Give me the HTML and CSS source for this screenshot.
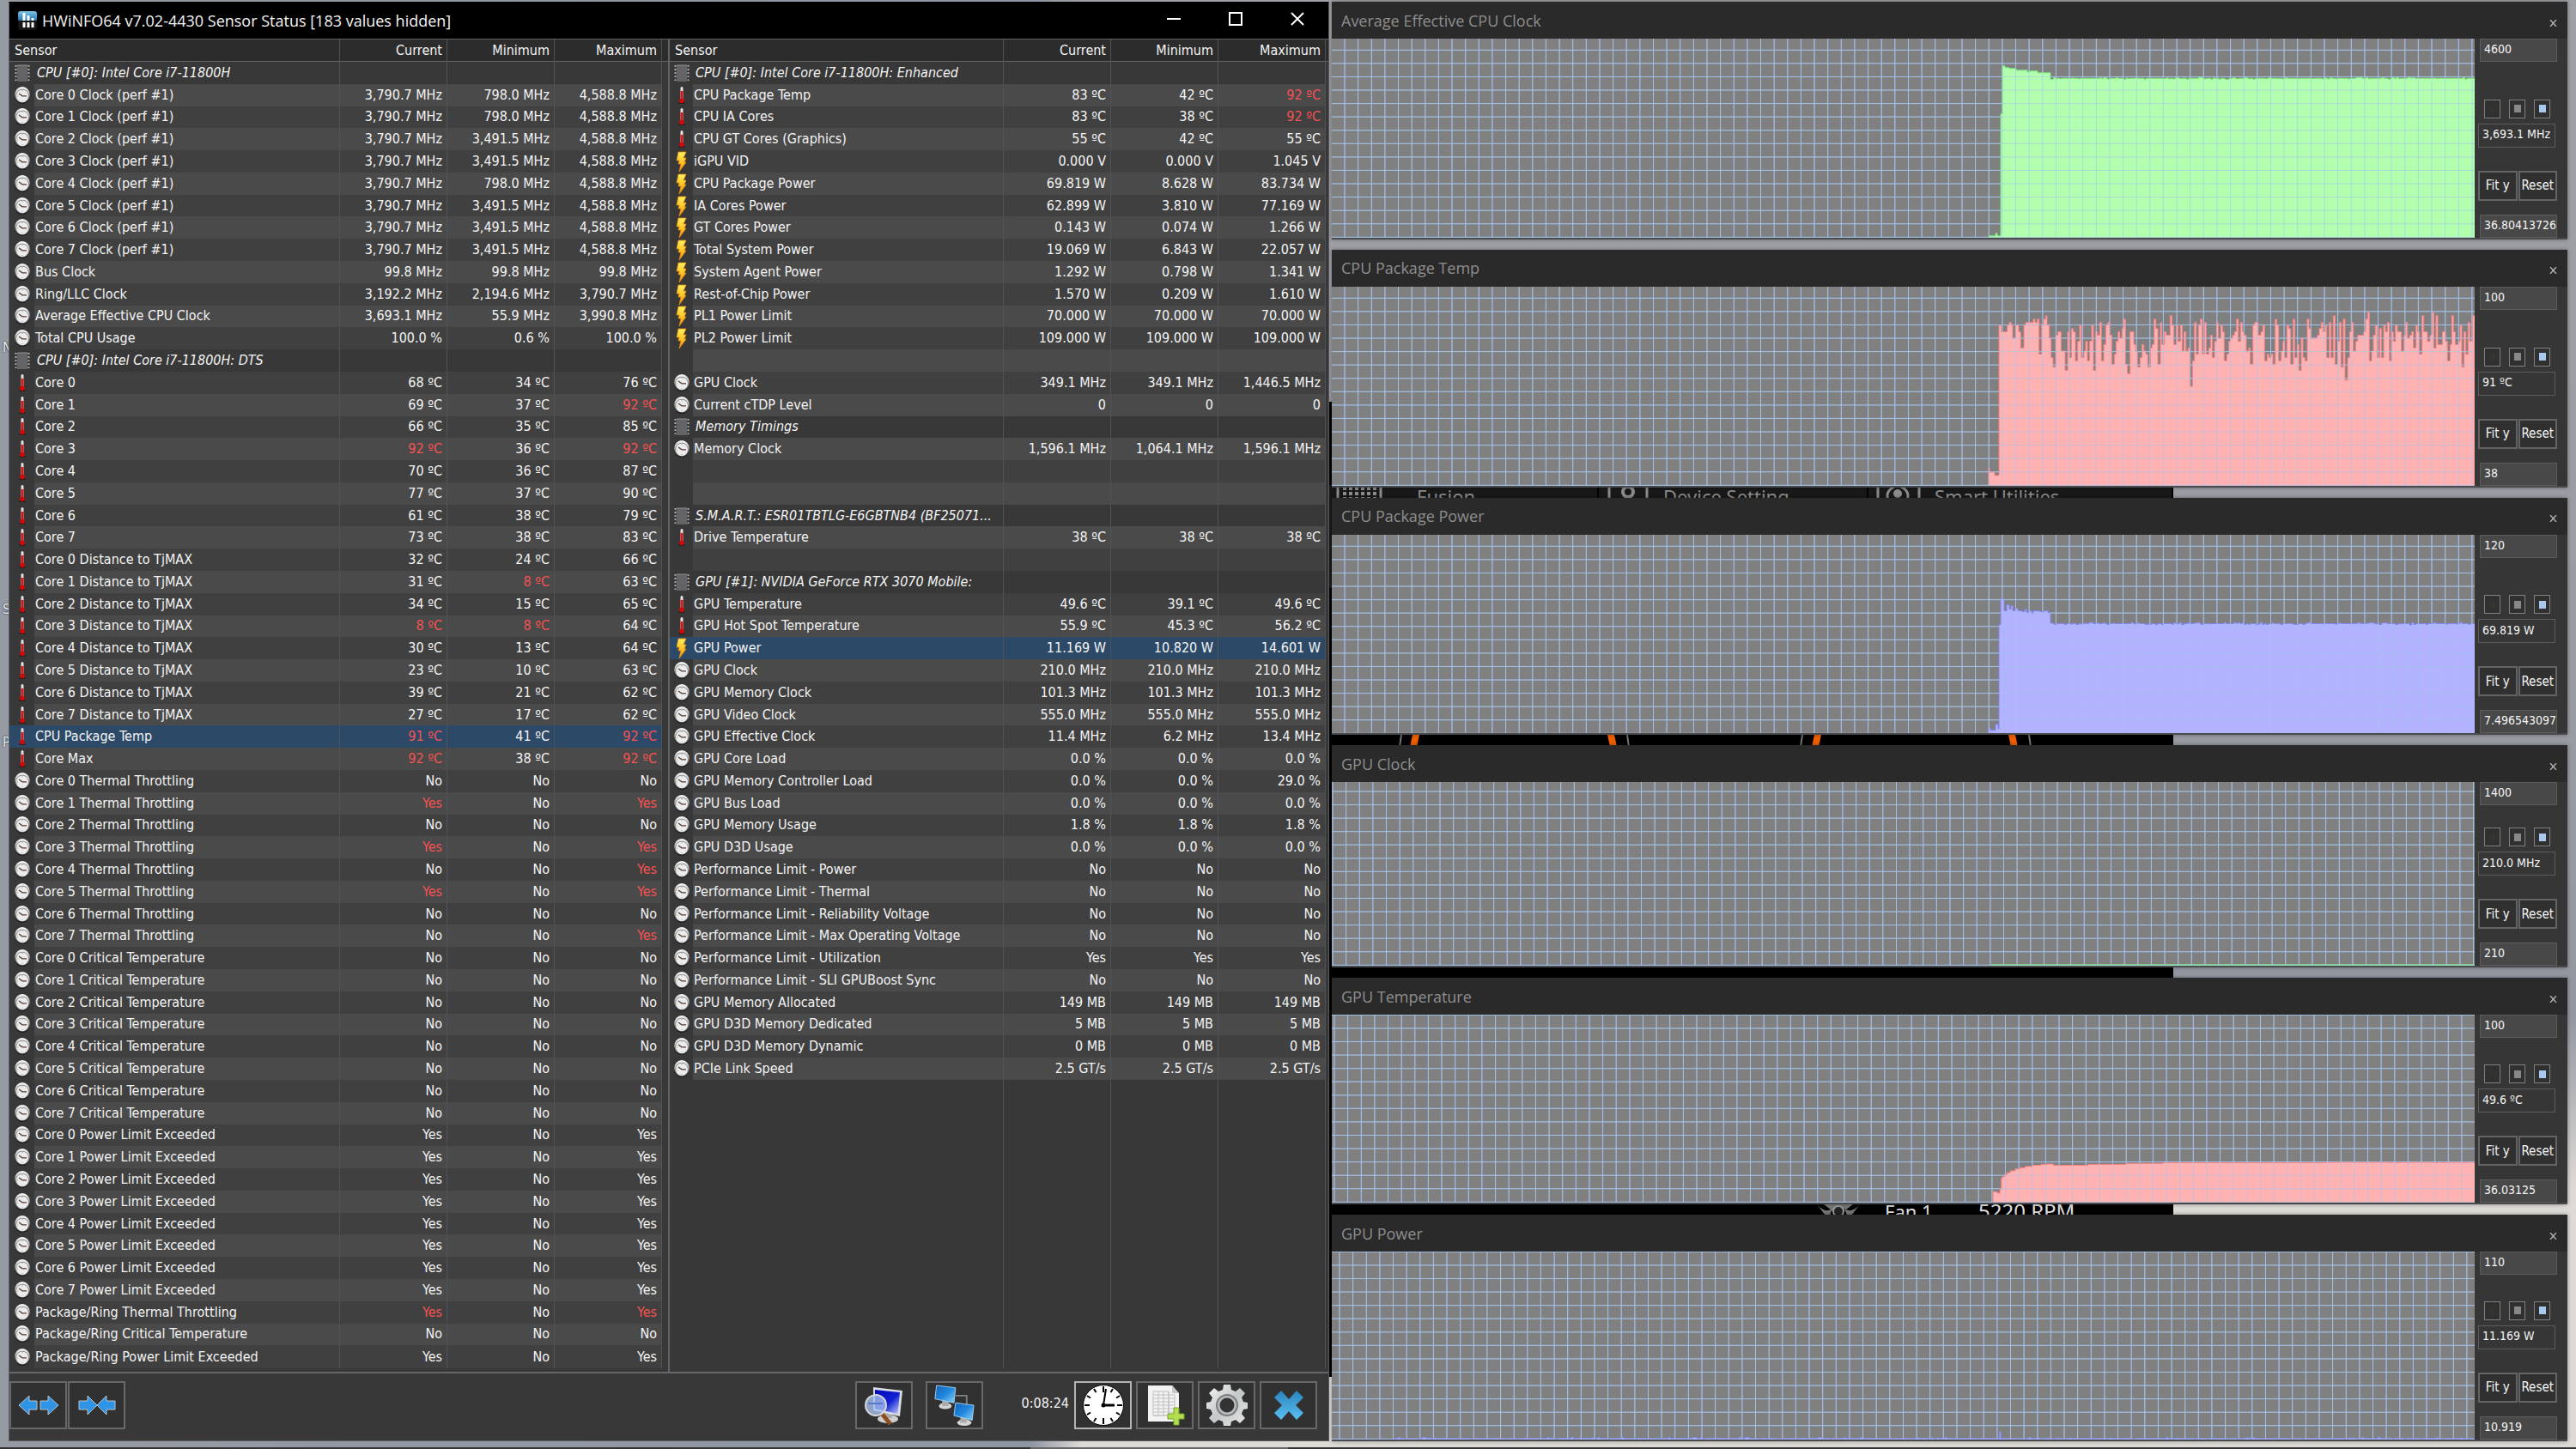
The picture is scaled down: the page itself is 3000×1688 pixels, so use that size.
FILE: index.html
```html
<!DOCTYPE html>
<html lang="en">
<head>
<meta charset="utf-8">
<title>HWiNFO64 Sensor Status</title>
<link rel="stylesheet" href="styles.css">
</head>
<body>
<svg class="defs" aria-hidden="true">
  <defs>
    <linearGradient id="g-rim" x1="0" y1="0" x2="0" y2="1"><stop offset="0" stop-color="#fff"/><stop offset=".5" stop-color="#aaa"/><stop offset="1" stop-color="#444"/></linearGradient>
    <linearGradient id="g-bolt" x1="0" y1="0" x2="0" y2="1"><stop offset="0" stop-color="#fff060"/><stop offset=".5" stop-color="#ffc628"/><stop offset="1" stop-color="#ff8c10"/></linearGradient>
    <linearGradient id="g-blue" x1="0" y1="0" x2="1" y2="1"><stop offset="0" stop-color="#1263b8"/><stop offset=".5" stop-color="#1f86dd"/><stop offset="1" stop-color="#8fd4fb"/></linearGradient>
    <linearGradient id="g-navy" x1="0" y1="0" x2="1" y2="1"><stop offset="0" stop-color="#0008b8"/><stop offset=".55" stop-color="#1020d0"/><stop offset="1" stop-color="#c8d0ff"/></linearGradient>
    <linearGradient id="g-metal" x1="0" y1="0" x2="1" y2="1"><stop offset="0" stop-color="#f6f6f6"/><stop offset=".5" stop-color="#c4c8c8"/><stop offset="1" stop-color="#e8e8e8"/></linearGradient>
    <linearGradient id="g-x" x1="0" y1="0" x2="0" y2="1"><stop offset="0" stop-color="#2a84bd"/><stop offset="1" stop-color="#5cc0f4"/></linearGradient>
    <linearGradient id="g-logo" x1="0" y1="0" x2="0" y2="1"><stop offset="0" stop-color="#7cc4ea"/><stop offset="1" stop-color="#1c6ca6"/></linearGradient>
    <symbol id="i-clock" viewBox="0 0 18 20"><ellipse cx="9" cy="11" rx="9" ry="9" fill="#1c1c1c"/><ellipse cx="9" cy="9.500" rx="8.800" ry="9.500" fill="url(#g-rim)"/><ellipse cx="9" cy="10.500" rx="7.400" ry="7.800" fill="#777"/><ellipse cx="9" cy="10.800" rx="7" ry="7.400" fill="#ececec"/><path d="M5 8l4 2.800h5" fill="none" stroke="#553a30" stroke-width="1.300"/><path d="M9 4v1.300M9 16v1.300M3 11h1" stroke="#999" stroke-width=".8"/></symbol>
    <symbol id="i-therm" viewBox="0 0 18 20"><ellipse cx="9" cy="19" rx="4" ry="1" fill="#222"/><rect x="7.500" y="0" width="3" height="17" rx="1.500" fill="#e8e0e0"/><rect x="7.600" y="5" width="2.800" height="11" fill="#d81818"/><ellipse cx="9" cy="16.500" rx="2.900" ry="2.800" fill="#d40808"/></symbol>
    <symbol id="i-bolt" viewBox="0 0 18 24"><path d="M5 1h9l-3 7h3l-2 5h2L6 24l2-9H5l1-4H3z" fill="url(#g-bolt)" stroke="#e08a10" stroke-width=".8"/></symbol>
    <symbol id="i-chip" viewBox="0 0 18 20"><path d="M1.500 1v18M16.500 1v18" stroke="#b4b4b4" stroke-width="2" stroke-dasharray="1.800 2.300"/><rect x="3" y="0" width="12" height="20" rx="1" fill="#646466"/><path d="M3 1.500h12" stroke="#7c7c80"/></symbol>
  </defs>
</svg>

<main class="desktop">
  <div class="desk-labels" aria-hidden="true"><span>N</span><span>S</span><span>P</span></div>

  <section class="backdrop" aria-label="Control Center">
    <div class="backdrop-tabs">
      <svg class="bt-icon" viewBox="0 0 54 24"><path d="M2 0v24M52 0v24" stroke="#8c8c8c" stroke-width="3"/><path d="M8 4h40M8 10h40M8 16h40" stroke="#8c8c8c" stroke-width="4" stroke-dasharray="4 3"/></svg><span class="bt-fusion">Fusion</span>
      <svg class="bt-icon" viewBox="0 0 54 24"><path d="M4 0v24M48 0v24" stroke="#8c8c8c" stroke-width="3"/><circle cx="26" cy="8" r="6" fill="none" stroke="#8c8c8c" stroke-width="4"/></svg><span class="bt-device">Device Setting</span>
      <svg class="bt-icon" viewBox="0 0 54 24"><path d="M3 0v24M51 0v24" stroke="#8c8c8c" stroke-width="3"/><path d="M16 20q-6-12 6-18M36 20q6-12-6-18" fill="none" stroke="#8c8c8c" stroke-width="3"/><circle cx="26" cy="10" r="5" fill="#8c8c8c"/></svg><span class="bt-smart">Smart Utilities</span>
    </div>
    <svg class="backdrop-dials" viewBox="0 0 983 12" preserveAspectRatio="none"><g fill="#f06000"><path d="M97 0h8l-3 12h-8zM324 0h8l3 12h-8zM565 0h8l-3 12h-8zM791 0h8l3 12h-8z"/></g><path d="M84 0l-2 12M347 0l2 12M551 0l-2 12M815 0l2 12" stroke="#777" stroke-width="2"/></svg>
    <div class="backdrop-fan">
      <svg viewBox="0 0 50 30"><path d="M0 3q10 12 20 4-10 10 0 22M50 3Q40 15 30 7q10 10 0 22M8 3h34L30 12H20z" fill="#777"/><circle cx="25" cy="11" r="6" fill="#222" stroke="#999" stroke-width="2"/></svg>
      <span>Fan 1</span><b>5220 RPM</b>
    </div>
  </section>

  <section class="sensors" aria-label="Sensor Status">
    <header class="titlebar">
      <svg class="logo" viewBox="0 0 22 22"><rect width="22" height="12" rx="3" fill="url(#g-logo)"/><rect y="11" width="22" height="11" rx="3" fill="#161616"/><path d="M7 2v9M12 5v6M17 8v3M7 13v6M12 13v6M17 13v6" stroke="#fff" stroke-width="3"/></svg>
      <h1>HWiNFO64 v7.02-4430 Sensor Status [183 values hidden]</h1>
      <button type="button" aria-label="Minimize"><svg viewBox="0 0 16 16"><path d="M0 8h16" stroke="#fff" stroke-width="2"/></svg></button>
      <button type="button" aria-label="Maximize"><svg viewBox="0 0 16 16"><path d="M1 1h14v14H1z" fill="none" stroke="#fff" stroke-width="2"/></svg></button>
      <button type="button" aria-label="Close"><svg viewBox="0 0 16 16"><path d="M1 1l14 14M15 1 1 15" stroke="#fff" stroke-width="2"/></svg></button>
    </header>
    <div class="panes">
      <div class="pane" id="pane-left"></div>
      <div class="pane pane-right" id="pane-right"></div>
    </div>
    <footer class="toolbar">
      <button type="button" class="tool" aria-label="Expand columns"><svg viewBox="0 0 48 24"><path d="M1 12 13 1v6h9v10h-9v6zM47 12 35 1v6h-9v10h9v6z" fill="#2f93e6" stroke="#b8c4cc"/></svg></button>
      <button type="button" class="tool" aria-label="Shrink columns"><svg viewBox="0 0 48 24"><path d="M24 12 13 1v6H3v10h10v6zM24 12 35 1v6h10v10H35v6z" fill="#2f93e6" stroke="#b8c4cc"/></svg></button>
      <span class="push"></span>
      <button type="button" class="tool" aria-label="Summary"><svg viewBox="0 0 48 48"><ellipse cx="29" cy="40" rx="12" ry="5" fill="#cfcfcf"/><path d="M24 30h10v9H24z" fill="#aaa"/><path d="M12 3l34 4-3 30-31-7z" fill="#d8dce4"/><path d="M14 6l29 3-2.500 25L14 28z" fill="url(#g-navy)"/><path d="M22 34l10 12" stroke="#8c4e20" stroke-width="5"/><circle cx="15" cy="24" r="12" fill="#a8c0ec" fill-opacity=".8" stroke="#d4d8dc" stroke-width="2"/><path d="M6 22h17" stroke="#5878d0" stroke-width="2"/></svg></button>
      <button type="button" class="tool tool-net" aria-label="Remote sensors"><svg viewBox="0 0 52 52"><path d="M28 14h14v14" fill="none" stroke="#7c8084" stroke-width="2"/><ellipse cx="15" cy="27" rx="8" ry="4" fill="#d4d4d4"/><path d="M11 20h8v7h-8z" fill="#aaa"/><path d="M4 1l24 3-2 19L2 18z" fill="url(#g-blue)" stroke="#a8d4f4"/><ellipse cx="39" cy="48" rx="9" ry="4" fill="#d4d4d4"/><path d="M34 40h8v8h-8z" fill="#aaa"/><path d="M28 23l23 3-2 19-23-6z" fill="url(#g-blue)" stroke="#a8d4f4"/></svg></button>
      <time class="elapsed">0:08:24</time>
      <button type="button" class="tool tool-active" aria-label="Reset clock"><svg viewBox="0 0 48 48"><circle cx="24" cy="24" r="23.500" fill="#fff" stroke="#000"/><g stroke="#000" stroke-width="2"><path d="M24 2v7M24 39v7M2 24h6M40 24h6"/><path d="M13 5l2.500 4M35 5l-2.500 4M5 13l4 2.500M43 13l-4 2.500M5 35l4-2.500M43 35l-4-2.500M13 43l2.500-4M35 43l-2.500-4"/></g><path d="M24 24l3-19" stroke="#000" stroke-width="2"/><path d="M24 24h13" stroke="#000" stroke-width="3"/><circle cx="24" cy="24" r="2.500"/></svg></button>
      <button type="button" class="tool" aria-label="Start logging"><svg viewBox="0 0 44 48"><path d="M2 1h28l8 9v33H2z" fill="#f2f2f2"/><path d="M30 1v9h8z" fill="#c8c8c8"/><path d="M8 8h18v28H8zM8 12h25M8 16h25M8 20h25M8 24h25M8 28h25M8 32h25M14 8v28M20 8v28M26 8v28M33 12v24H8" fill="none" stroke="#c0c0c0"/><path d="M32 27h6v7h6v6h-6v7h-6v-7h-7v-6h7z" fill="#b4dc50" stroke="#6ea820"/></svg></button>
      <button type="button" class="tool" aria-label="Settings"><svg viewBox="0 0 48 48"><path d="M20 0h8l1 6 5 2 5-4 6 6-4 5 2 5 5 1v7l-5 1-2 5 4 5-6 6-5-4-5 2-1 5h-8l-1-5-5-2-5 4-6-6 4-5-2-5-5-1v-7l5-1 2-5-4-5 6-6 5 4 5-2z" fill="url(#g-metal)"/><circle cx="24" cy="24" r="13" fill="#7c7e80"/><circle cx="24" cy="24" r="11" fill="#b8babc"/><circle cx="24" cy="24" r="8.500" fill="#333"/></svg></button>
      <button type="button" class="tool" aria-label="Close sensors"><svg viewBox="0 0 36 36"><path d="M9 1l9 10 9-10 8 8-9 9 9 9-8 8-9-10-9 10-8-8 9-9-9-9z" fill="url(#g-x)"/></svg></button>
    </footer>
  </section>

  <div class="graphs" id="graphs"></div>
  <div class="taskbar" aria-hidden="true"></div>
</main>
<script src="script.js"></script>
</body>
</html>
```
FILE: styles.css
```css
* { box-sizing: border-box; }

body {
  margin: 0;
  background: #9a9ca2;
  color: #f4f4f4;
  font: 16px/20px "DejaVu Sans Condensed", "Noto Sans", sans-serif;
}

button, input { font: inherit; color: inherit; border-radius: 0; margin: 0; }
.defs { position: absolute; width: 0; height: 0; }

.desktop {
  position: relative;
  display: grid;
  grid-template-columns: 1538fr 1439fr;
  grid-template-rows: 1fr 2px;
  column-gap: 3px;
  row-gap: 7px;
  min-height: 100vh;
  padding: 2px 10px 0;
  overflow: hidden;
  background: linear-gradient(90deg, #969ba3 0, #8e96a4 40%, transparent 42%), linear-gradient(#9fa1a6 0, #9a9ca3 50%, #9397a1 70%, #dedad6 82%, #dedad6 100%);
}

.desk-labels {
  position: absolute;
  left: 3px;
  top: 395px;
  display: grid;
  grid-template-rows: 305px 155px 20px;
  color: #e8ecf0;
  text-shadow: 0 0 2px #000;
}

/* application partly hidden behind the graphs */
.backdrop {
  position: absolute;
  left: 1548px;
  top: 468px;
  width: 983px;
  height: 1136px;
  background: #000;
  font-family: "Noto Sans", sans-serif;
}
.backdrop-tabs {
  position: absolute;
  top: 97px;
  left: 0;
  display: grid;
  grid-template-columns: 102px 212px 75px 239px 77px 278px;
  width: 100%;
  height: 120px;
  background: #191919;
  color: #8c8c8c;
  font-size: 22px;
  line-height: 26px;
}
.bt-icon { width: 54px; height: 24px; margin-left: 8px; }
.backdrop-tabs span { border-right: 2px solid #000; }
.backdrop-dials { position: absolute; top: 388px; left: 0; width: 100%; height: 14px; }
.backdrop-fan {
  position: absolute;
  top: 928px;
  left: 568px;
  display: grid;
  grid-template-columns: 50px 80px auto;
  column-gap: 29px;
  font-size: 22px;
  line-height: 30px;
  color: #e4e4e4;
}
.backdrop-fan svg { width: 50px; height: 30px; margin-top: 4px; }
.backdrop-fan b { font-weight: 400; font-size: 24px; }

/* sensor window */
.sensors {
  position: relative;
  display: flex;
  flex-direction: column;
  background: #383838;
  border: 1px solid #5a5c60;
  border-top-color: #000;
}
.titlebar {
  display: flex;
  align-items: center;
  height: 42px;
  padding-left: 10px;
  background: #000;
}
.logo { width: 22px; height: 22px; margin-right: 6px; }
.titlebar h1 {
  flex: 1;
  margin: 0;
  font: 400 18px/24px "Open Sans", "Noto Sans", sans-serif;
}
.titlebar button {
  width: 72px;
  height: 42px;
  padding: 0;
  border: 0;
  background: none;
}
.titlebar button svg { width: 16px; height: 16px; }

.panes {
  flex: 1;
  display: grid;
  grid-template-columns: 767fr 769fr;
  border-top: 1px solid #606266;
  border-bottom: 2px solid #64666a;
}
.pane { display: flex; padding-bottom: 4px; }
.pane-right { border-left: 2px solid #606266; }

.readings {
  width: 100%;
  height: 100%;
  table-layout: fixed;
  border-collapse: separate;
  border-spacing: 0;
}
.col-icon { width: 29px; }
.col-value { width: 125px; }
.col-end { width: 8px; }
.pane-right .col-icon { width: 27px; }
.pane-right .col-end { width: 4px; }
.readings th, .readings td { padding: 0; font-weight: 400; white-space: nowrap; }
.readings tr { height: 25px; }
.readings thead tr { height: 26px; }
.readings thead th {
  background: #2c2c2c;
  border-bottom: 1px solid #606266;
  text-align: right;
  padding-right: 5px;
}
.readings thead th:first-child { text-align: left; padding-left: 6px; }
.readings thead th + th { border-left: 1px solid #505256; }
.readings tbody th { text-align: left; overflow: hidden; text-overflow: ellipsis; padding-left: 1px; }
.readings tbody td + td, .readings th + td { text-align: right; padding-right: 5px; border-left: 1px solid #4e535a; }
.readings .icon svg { display: block; width: 18px; height: 20px; margin: 0 auto; }
.readings .icon .tall { height: 24px; }
.readings tr.odd > :not(.icon):not(.end) { background: #4a4a4a; }
.readings tr.even > :not(.icon):not(.end) { background: #404040; }
.readings tr.group th { font-style: italic; padding-left: 3px; }
.readings tr.selected > .icon, .readings tr.selected > :not(.icon):not(.end) { background: #2c4a68; }
.readings tbody .hot { color: #f55252; }

.toolbar {
  display: flex;
  align-items: center;
  gap: 1px;
  height: 78px;
  padding: 0 13px 5px 0;
}
.tool {
  display: flex;
  align-items: center;
  justify-content: center;
  width: 67px;
  height: 56px;
  padding: 0;
  border: 2px solid #68686a;
  background: #313131;
}
.tool svg { width: 48px; height: 48px; }
.tool:nth-of-type(-n+2) svg { height: 24px; }
.tool:last-child svg { width: 36px; height: 36px; }
.tool:nth-last-child(-n+3) { margin-left: 4px; }
.tool-net { margin-left: 14px; }
.tool-active { border-color: #b4b4b4; }
.push { flex: 1; }
.elapsed { margin: 0 5px 4px 44px; }

/* graph windows */
.graphs {
  position: relative;
  display: grid;
  grid-template-rows: 277fr 277fr 277fr 259fr 264fr 264fr;
  row-gap: 12px;
}
.graph {
  display: flex;
  flex-direction: column;
  background: #363636;
  box-shadow: 0 0 5px rgba(0, 0, 0, .35);
}
.graph-title {
  display: flex;
  align-items: center;
  justify-content: space-between;
  height: 43px;
  padding: 0 12px 0 11px;
  background: #2a2a2a;
  color: #8e8e8e;
  font: 18px/24px "Open Sans", "Noto Sans", sans-serif;
}
.graph-title h2 { margin: 0; font: inherit; }
.graph-title button { border: 0; padding: 0; background: none; width: 10px; line-height: 20px; }
.graph-title button svg { width: 9px; height: 8px; }
.graph-body { flex: 1; display: flex; min-height: 0; border-bottom: 2px solid #4a4a4c; }
.plot { flex: 1; min-width: 0; height: 0; min-height: 100%; background: #808080; display: block; }
.plot .grid { fill: none; stroke: #a6c4ec; stroke-opacity: .85; }
.plot .green { fill: #b2ffb0; stroke: #74e874; }
.plot .red { fill: #ffb2b2; stroke: #f58080; }
.plot .blue { fill: #b2b2ff; stroke: #8484f4; }

.controls {
  display: flex;
  flex-direction: column;
  width: 108px;
  padding: 0 12px 0 4px;
  font-size: 15px;
}
.controls input {
  width: 90px;
  height: 27px;
  margin-left: 2px;
  padding: 0 0 3px 4px;
  border: 1px solid #5c5c5c;
  background: #484848;
  font-size: 14px;
}
.controls .live { margin: 6px 0 27px; height: 28px; background: #363636; }
.swatches { display: flex; gap: 10px; margin: auto 0 0 7px; }
.swatches button {
  display: grid;
  place-items: center;
  width: 19px;
  height: 22px;
  padding: 0;
  border: 1px solid #808080;
  background: #303030;
}
.swatches button::after { content: ""; width: 8px; height: 9px; background: var(--c); }
.actions { display: flex; gap: 1px; margin-bottom: 16px; }
.actions button {
  width: 46px;
  height: 35px;
  padding: 0;
  border: 2px solid #646464;
  background: #303030;
}

.taskbar { grid-column: 1 / -1; margin: 0 -10px; background: linear-gradient(90deg, #333 40%, #666 40%, #666 50%, #333 50%); }
```
FILE: script.js
```js
// type | name | current | minimum | maximum   (trailing ! = over the threshold)
// g group, c clock, t temperature, p power, - blank; capital letter = selected row
const yn = (s) => s.replace(/Y/g, 'Yes').replace(/N/g, 'No');
const series = (type, name, rows) =>
  rows.map((r, i) => type + '|' + name.replace('#n', i) + '|' + r);

const left = [
  'g|CPU [#0]: Intel Core i7-11800H',
  ...series('c', 'Core #n Clock (perf #1)', [
    '3,790.7 MHz|798.0 MHz|4,588.8 MHz', '3,790.7 MHz|798.0 MHz|4,588.8 MHz',
    '3,790.7 MHz|3,491.5 MHz|4,588.8 MHz', '3,790.7 MHz|3,491.5 MHz|4,588.8 MHz',
    '3,790.7 MHz|798.0 MHz|4,588.8 MHz', '3,790.7 MHz|3,491.5 MHz|4,588.8 MHz',
    '3,790.7 MHz|3,491.5 MHz|4,588.8 MHz', '3,790.7 MHz|3,491.5 MHz|4,588.8 MHz']),
  'c|Bus Clock|99.8 MHz|99.8 MHz|99.8 MHz',
  'c|Ring/LLC Clock|3,192.2 MHz|2,194.6 MHz|3,790.7 MHz',
  'c|Average Effective CPU Clock|3,693.1 MHz|55.9 MHz|3,990.8 MHz',
  'c|Total CPU Usage|100.0 %|0.6 %|100.0 %',
  'g|CPU [#0]: Intel Core i7-11800H: DTS',
  ...series('t', 'Core #n', ['68 ºC|34 ºC|76 ºC', '69 ºC|37 ºC|92 ºC!', '66 ºC|35 ºC|85 ºC', '92 ºC!|36 ºC|92 ºC!',
    '70 ºC|36 ºC|87 ºC', '77 ºC|37 ºC|90 ºC', '61 ºC|38 ºC|79 ºC', '73 ºC|38 ºC|83 ºC']),
  ...series('t', 'Core #n Distance to TjMAX', ['32 ºC|24 ºC|66 ºC', '31 ºC|8 ºC!|63 ºC', '34 ºC|15 ºC|65 ºC', '8 ºC!|8 ºC!|64 ºC',
    '30 ºC|13 ºC|64 ºC', '23 ºC|10 ºC|63 ºC', '39 ºC|21 ºC|62 ºC', '27 ºC|17 ºC|62 ºC']),
  'T|CPU Package Temp|91 ºC!|41 ºC|92 ºC!',
  't|Core Max|92 ºC!|38 ºC|92 ºC!',
  ...series('c', 'Core #n Thermal Throttling', ['N|N|N', 'Y!|N|Y!', 'N|N|N', 'Y!|N|Y!', 'N|N|Y!', 'Y!|N|Y!', 'N|N|N', 'N|N|Y!'].map(yn)),
  ...series('c', 'Core #n Critical Temperature', Array(8).fill('No|No|No')),
  ...series('c', 'Core #n Power Limit Exceeded', Array(8).fill('Yes|No|Yes')),
  'c|Package/Ring Thermal Throttling|Yes!|No|Yes!',
  'c|Package/Ring Critical Temperature|No|No|No',
  'c|Package/Ring Power Limit Exceeded|Yes|No|Yes',
];

const right = [
  'g|CPU [#0]: Intel Core i7-11800H: Enhanced',
  't|CPU Package Temp|83 ºC|42 ºC|92 ºC!',
  't|CPU IA Cores|83 ºC|38 ºC|92 ºC!',
  't|CPU GT Cores (Graphics)|55 ºC|42 ºC|55 ºC',
  'p|iGPU VID|0.000 V|0.000 V|1.045 V',
  'p|CPU Package Power|69.819 W|8.628 W|83.734 W',
  'p|IA Cores Power|62.899 W|3.810 W|77.169 W',
  'p|GT Cores Power|0.143 W|0.074 W|1.266 W',
  'p|Total System Power|19.069 W|6.843 W|22.057 W',
  'p|System Agent Power|1.292 W|0.798 W|1.341 W',
  'p|Rest-of-Chip Power|1.570 W|0.209 W|1.610 W',
  'p|PL1 Power Limit|70.000 W|70.000 W|70.000 W',
  'p|PL2 Power Limit|109.000 W|109.000 W|109.000 W',
  '-|',
  'c|GPU Clock|349.1 MHz|349.1 MHz|1,446.5 MHz',
  'c|Current cTDP Level|0|0|0',
  'g|Memory Timings',
  'c|Memory Clock|1,596.1 MHz|1,064.1 MHz|1,596.1 MHz',
  '-|', '-|',
  'g|S.M.A.R.T.: ESR01TBTLG-E6GBTNB4 (BF25071...',
  't|Drive Temperature|38 ºC|38 ºC|38 ºC',
  '-|',
  'g|GPU [#1]: NVIDIA GeForce RTX 3070 Mobile:',
  't|GPU Temperature|49.6 ºC|39.1 ºC|49.6 ºC',
  't|GPU Hot Spot Temperature|55.9 ºC|45.3 ºC|56.2 ºC',
  'P|GPU Power|11.169 W|10.820 W|14.601 W',
  'c|GPU Clock|210.0 MHz|210.0 MHz|210.0 MHz',
  'c|GPU Memory Clock|101.3 MHz|101.3 MHz|101.3 MHz',
  'c|GPU Video Clock|555.0 MHz|555.0 MHz|555.0 MHz',
  'c|GPU Effective Clock|11.4 MHz|6.2 MHz|13.4 MHz',
  'c|GPU Core Load|0.0 %|0.0 %|0.0 %',
  'c|GPU Memory Controller Load|0.0 %|0.0 %|29.0 %',
  'c|GPU Bus Load|0.0 %|0.0 %|0.0 %',
  'c|GPU Memory Usage|1.8 %|1.8 %|1.8 %',
  'c|GPU D3D Usage|0.0 %|0.0 %|0.0 %',
  'c|Performance Limit - Power|No|No|No',
  'c|Performance Limit - Thermal|No|No|No',
  'c|Performance Limit - Reliability Voltage|No|No|No',
  'c|Performance Limit - Max Operating Voltage|No|No|No',
  'c|Performance Limit - Utilization|Yes|Yes|Yes',
  'c|Performance Limit - SLI GPUBoost Sync|No|No|No',
  'c|GPU Memory Allocated|149 MB|149 MB|149 MB',
  'c|GPU D3D Memory Dedicated|5 MB|5 MB|5 MB',
  'c|GPU D3D Memory Dynamic|0 MB|0 MB|0 MB',
  'c|PCIe Link Speed|2.5 GT/s|2.5 GT/s|2.5 GT/s',
];

const ICONS = { g: 'chip', c: 'clock', t: 'therm', p: 'bolt' };

function table(rows, total) {
  const body = [];
  for (let i = 0; i < total; i++) {
    const [code = '', name = '', ...vals] = (rows[i] || '').split('|');
    const type = code.toLowerCase();
    const cls = !code ? '' : type === 'g' ? 'group' : (i % 2 ? 'odd' : 'even') + (code === 'T' || code === 'P' ? ' selected' : '');
    const icon = ICONS[type] ? `<svg${type === 'p' ? ' class="tall"' : ''} aria-hidden="true"><use href="#i-${ICONS[type]}"/></svg>` : '';
    const cells = [0, 1, 2].map((k) => {
      const v = vals[k] || '';
      return v.endsWith('!') ? `<td class="hot">${v.slice(0, -1)}</td>` : `<td>${v}</td>`;
    }).join('');
    body.push(`<tr class="${cls}"><td class="icon">${icon}</td><th scope="row">${name}</th>${cells}<td class="end"></td></tr>`);
  }
  return `<table class="readings"><colgroup><col class="col-icon"><col><col class="col-value"><col class="col-value"><col class="col-value"><col class="col-end"></colgroup>
    <thead><tr><th colspan="2" scope="col">Sensor</th><th scope="col">Current</th><th scope="col">Minimum</th><th scope="col">Maximum</th><th></th></tr></thead><tbody>${body.join('')}</tbody></table>`;
}

document.getElementById('pane-left').innerHTML = table(left, left.length);
document.getElementById('pane-right').innerHTML = table(right, left.length);

// ---- graphs -------------------------------------------------------------
const W = 1331;
let seed = 7;
const rnd = () => (seed = (seed * 16807) % 2147483647) / 2147483647;

// A trace is a list of [xEnd, y] steps, drawn from a start x down to the base line.
function noisy(from, to, y, amp, odds) {
  const out = [];
  for (let x = from; x < to; x += 2.35) out.push([x + 2.35, y + (rnd() < odds ? (rnd() - 0.5) * amp : 0)]);
  return out;
}
const scaled = (text, fx, fy) => text.trim().split(/\s+/).map((p) => {
  const [x, y] = p.split(':').map(Number);
  return [fx(x), fy(y)];
});

const clock = [[773, 231], [775, 228], [779, 231], [781, 88], [784, 32], [789, 34], [797, 35], [810, 37], [813, 39], [822, 38], [829, 40], [837, 40],
  ...noisy(838, W, 46.500, 2.500, 0.400)];

const temp = [[766, 212], [772, 217], [777, 221],
  ...scaled(`62:90 83:113 90:90 97:81 102:90 112:136 123:90 130:113 141:170 147:90 174:81 180:69 188:81 194:69 203:192 210:90
    217:69 222:57 230:90 236:136 243:204 252:237 260:125 271:113 285:181 294:249 300:113 307:204 313:102 321:113 329:215 336:147
    342:90 351:204 357:181 363:147 371:215 378:147 384:90 392:249 398:113 406:125 412:81 420:215 427:158 434:90 441:81 448:125
    457:227 463:192 470:147 476:113 484:136 490:102 496:69 503:227 512:260 525:113 532:158 538:181 547:237 554:204 560:158 567:181
    574:192 583:237 589:170 596:158 602:69 609:102 618:227 623:81 632:158 638:113 652:125 658:57 665:90 674:158 679:90 688:147
    694:90 701:181 707:113 715:181 721:170 730:305 737:215 743:81 751:192 758:90 764:69 772:192 778:81 787:192 793:170 799:125
    807:204 814:147 820:81 829:136 835:90 841:113 850:215 857:192 863:147 870:136 877:125 884:113 890:69
    898:147 904:81 910:113 918:125 927:181 932:170 941:227 947:90 960:81 969:125 976:113 982:90 991:215 997:192 1005:204 1011:192
    1019:227 1024:69 1031:90 1040:215 1046:181 1052:147 1060:204 1066:90 1073:102 1082:227 1087:69 1096:204 1102:158 1110:249
    1116:136 1123:204 1131:215 1137:69 1143:102 1166:136 1173:125 1180:102 1186:81 1194:113 1199:90 1208:204 1214:81 1222:204
    1228:57 1237:227 1243:147 1249:81 1257:237 1263:69 1272:283 1279:204 1286:113 1292:81 1300:181 1307:147 1328:125 1335:113
    1342:69 1348:45 1356:215 1362:181 1369:125 1375:90 1384:204 1390:102 1398:204 1404:90 1411:113 1418:81 1426:215 1432:113
    1439:147 1446:90 1460:113 1469:181 1475:125 1481:81 1489:136 1496:125 1502:113 1511:170 1516:90 1523:113 1532:192 1538:57
    1551:113 1560:147 1567:125 1573:45 1581:170 1587:57 1603:158 1614:113 1621:147 1630:215 1636:158 1642:57 1648:113 1659:158
    1665:147 1671:90 1679:237 1685:113 1693:192 1699:81 1708:147 1716:57`, (x) => 759 + x / 3, (y) => 15 + y / 3)];

const power = [[767, 226], [770, 229], [773, 229], [776, 222], [777, 227], [779, 105], [783, 75], [786, 89], [789, 82], [791, 87], [793, 83], [796, 89], [799, 86],
  [804, 89], [807, 90], [809, 87], [812, 91], [815, 89], [817, 92], [824, 89], [830, 90], [834, 89], [837, 91],
  ...noisy(837, W, 104, 3, 0.500)];

const gpuTemp = [...scaled('390:746 395:748 399:751 402:738 404:702 408:698 413:692 420:685 430:679 440:673 450:669 465:665 482:661 495:658 508:657 578:661 655:658 730:655 900:653 1060:653',
  (x) => 549 + x / 1.742, (y) => (y - 174) / 2.761), ...noisy(1158, W, 173, 1, 0.300)];

const gpuPower = [...noisy(70, 777, 219, 3, 0.300), [779, 211], ...noisy(779, W, 219, 3, 0.250)];

const graphs = [
  ['Average Effective CPU Clock', 233, 15, 'green', 765, clock, '4600', '3,693.1 MHz', '36.80413726'],
  ['CPU Package Temp', 233, 15, 'red', 765, temp, '100', '91 ºC', '38'],
  ['CPU Package Power', 233, 15, 'blue', 765, power, '120', '69.819 W', '7.496543097'],
  ['GPU Clock', 215, 1, 'green', 768, [[W, 214]], '1400', '210.0 MHz', '210'],
  ['GPU Temperature', 220, 3, 'red', 770, gpuTemp, '100', '49.6 ºC', '36.03125'],
  ['GPU Power', 220, 9, 'blue', 70, gpuPower, '110', '11.169 W', '10.919'],
];

function plot([title, h, phase, color, start, trace]) {
  let d = `M${start} ${h}`;
  for (const [x, y] of trace) d += `V${y.toFixed(1)}H${x.toFixed(1)}`;
  d += `V${h}`;
  let g = '';
  for (let x = phase; x < W; x += 15.63) g += `M${x.toFixed(1)} 0V${h}`;
  for (let y = h - 0.5; y > 0; y -= 15.65) g += `M0 ${y.toFixed(1)}H${W}`;
  return `<svg class="plot" viewBox="0 0 ${W} ${h}" preserveAspectRatio="none" role="img" aria-label="${title}"><path class="grid" d="${g}"/><path class="${color}" d="${d}"/><path class="grid" d="${g}" opacity=".7"/></svg>`;
}

document.getElementById('graphs').innerHTML = graphs.map((g) => {
  const [title, , , , , , max, live, min] = g;
  return `<section class="graph"><header class="graph-title"><h2>${title}</h2><button type="button" aria-label="Close ${title}"><svg viewBox="0 0 9 8"><path d="M1 0l7 8M8 0L1 8" stroke="#b0b0b0" stroke-width="1.400"/></svg></button></header>
  <div class="graph-body">${plot(g)}<div class="controls">
    <input type="text" aria-label="${title} maximum" value="${max}">
    <div class="swatches"><button type="button" style="--c:#333330" aria-label="Background color"></button><button type="button" style="--c:#888" aria-label="Plot color"></button><button type="button" style="--c:#a8c8f0" aria-label="Grid color"></button></div>
    <input type="text" class="live" aria-label="${title} current" value="${live}" readonly>
    <div class="actions"><button type="button">Fit y</button><button type="button">Reset</button></div>
    <input type="text" aria-label="${title} minimum" value="${min}">
  </div></div></section>`;
}).join('');
```
